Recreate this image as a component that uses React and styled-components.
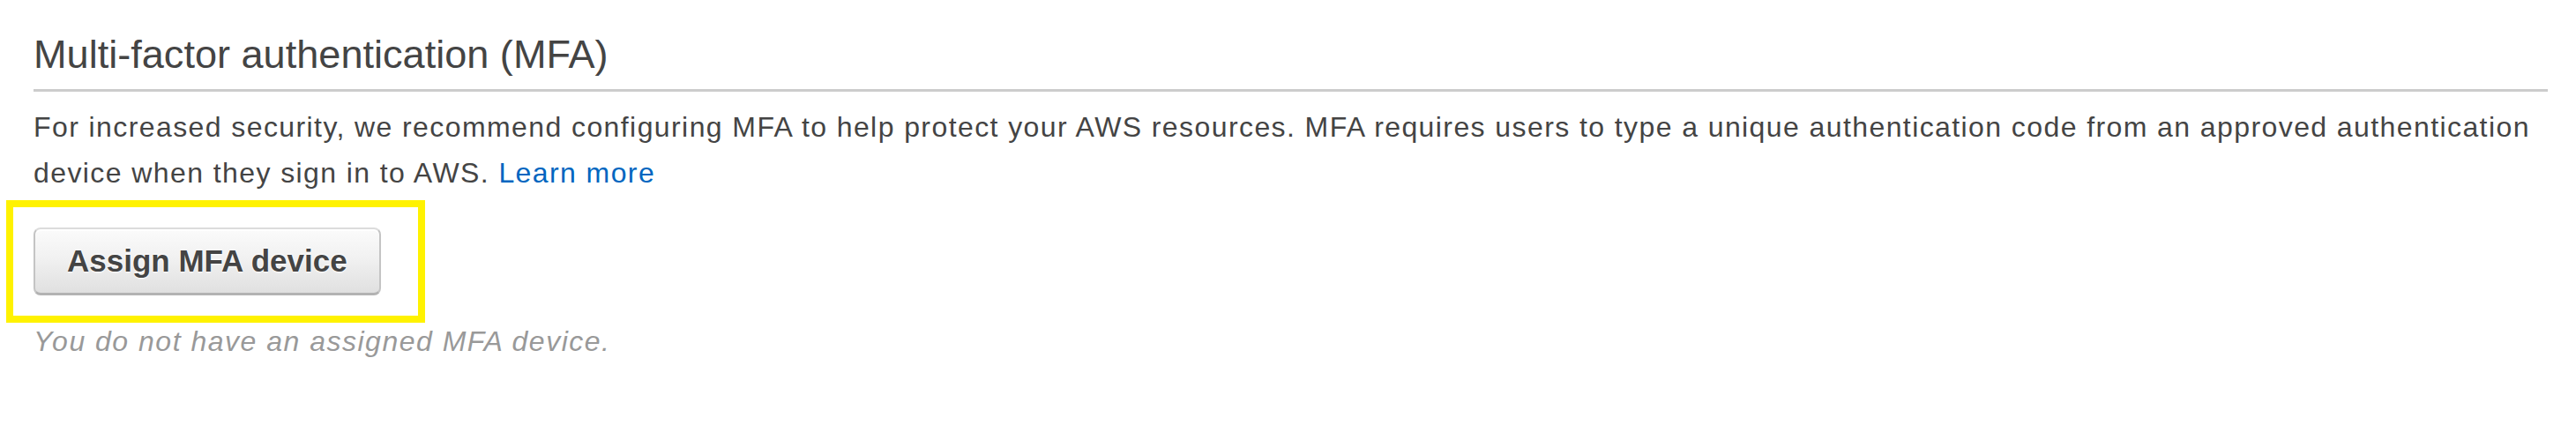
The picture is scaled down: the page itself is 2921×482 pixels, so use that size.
import React from "react";
import styled, { createGlobalStyle } from "styled-components";

const GlobalStyle = createGlobalStyle`
  html, body {
    margin: 0;
    padding: 0;
    background: #ffffff;
  }
  body {
    font-family: "Liberation Sans", Arial, sans-serif;
    color: #444444;
  }
`;

const Page = styled.main`
  padding: 34px 32px 40px 38px;
`;

const SectionTitle = styled.h2`
  margin: 0;
  font-size: 45.1px;
  font-weight: 400;
  line-height: 56px;
  color: #444444;
  padding-bottom: 11px;
  border-bottom: 3px solid #cccccc;
`;

const Paragraph = styled.p`
  margin: 14px 0 0;
  font-size: 32px;
  letter-spacing: 1.41px;
  line-height: 52px;
  color: #444444;
`;

const Link = styled.a`
  color: #0066c0;
  text-decoration: none;
`;

const ActionRow = styled.div`
  margin-top: 36px;
  display: flex;
`;

const ButtonWrap = styled.div`
  position: relative;
  display: inline-flex;
`;

const Highlight = styled.div`
  position: absolute;
  top: -31px;
  left: -31px;
  right: -50px;
  bottom: -31px;
  border: 8px solid #fff200;
  pointer-events: none;
`;

const Button = styled.button`
  height: 77px;
  padding: 0 36px;
  font-family: "Liberation Sans", Arial, sans-serif;
  font-size: 35px;
  font-weight: 700;
  color: #444444;
  text-shadow: 0 1px 2px #ffffff, 0 -1px 2px #ffffff;
  background: linear-gradient(#fbfbfb, #f1f1f1 45%, #e0e0e0);
  border: 2px solid #c4c4c4;
  border-top-color: #dcdcdc;
  border-bottom: 3px solid #b3b3b3;
  border-radius: 8px;
  box-shadow: inset 0 2px 0 #ffffff;
  cursor: pointer;
`;

const Note = styled.p`
  margin: 27px 0 0;
  font-size: 32px;
  font-style: italic;
  letter-spacing: 1.5px;
  line-height: 51px;
  color: #999999;
`;

export default function App() {
  return (
    <>
      <GlobalStyle />
      <Page>
        <SectionTitle>Multi-factor authentication (MFA)</SectionTitle>
        <Paragraph>
          For increased security, we recommend configuring MFA to help protect
          your AWS resources. MFA requires users to type a unique
          authentication code from an approved authentication device when they
          sign in to AWS. <Link href="#">Learn more</Link>
        </Paragraph>
        <ActionRow>
          <ButtonWrap>
            <Button type="button">Assign MFA device</Button>
            <Highlight />
          </ButtonWrap>
        </ActionRow>
        <Note>You do not have an assigned MFA device.</Note>
      </Page>
    </>
  );
}
